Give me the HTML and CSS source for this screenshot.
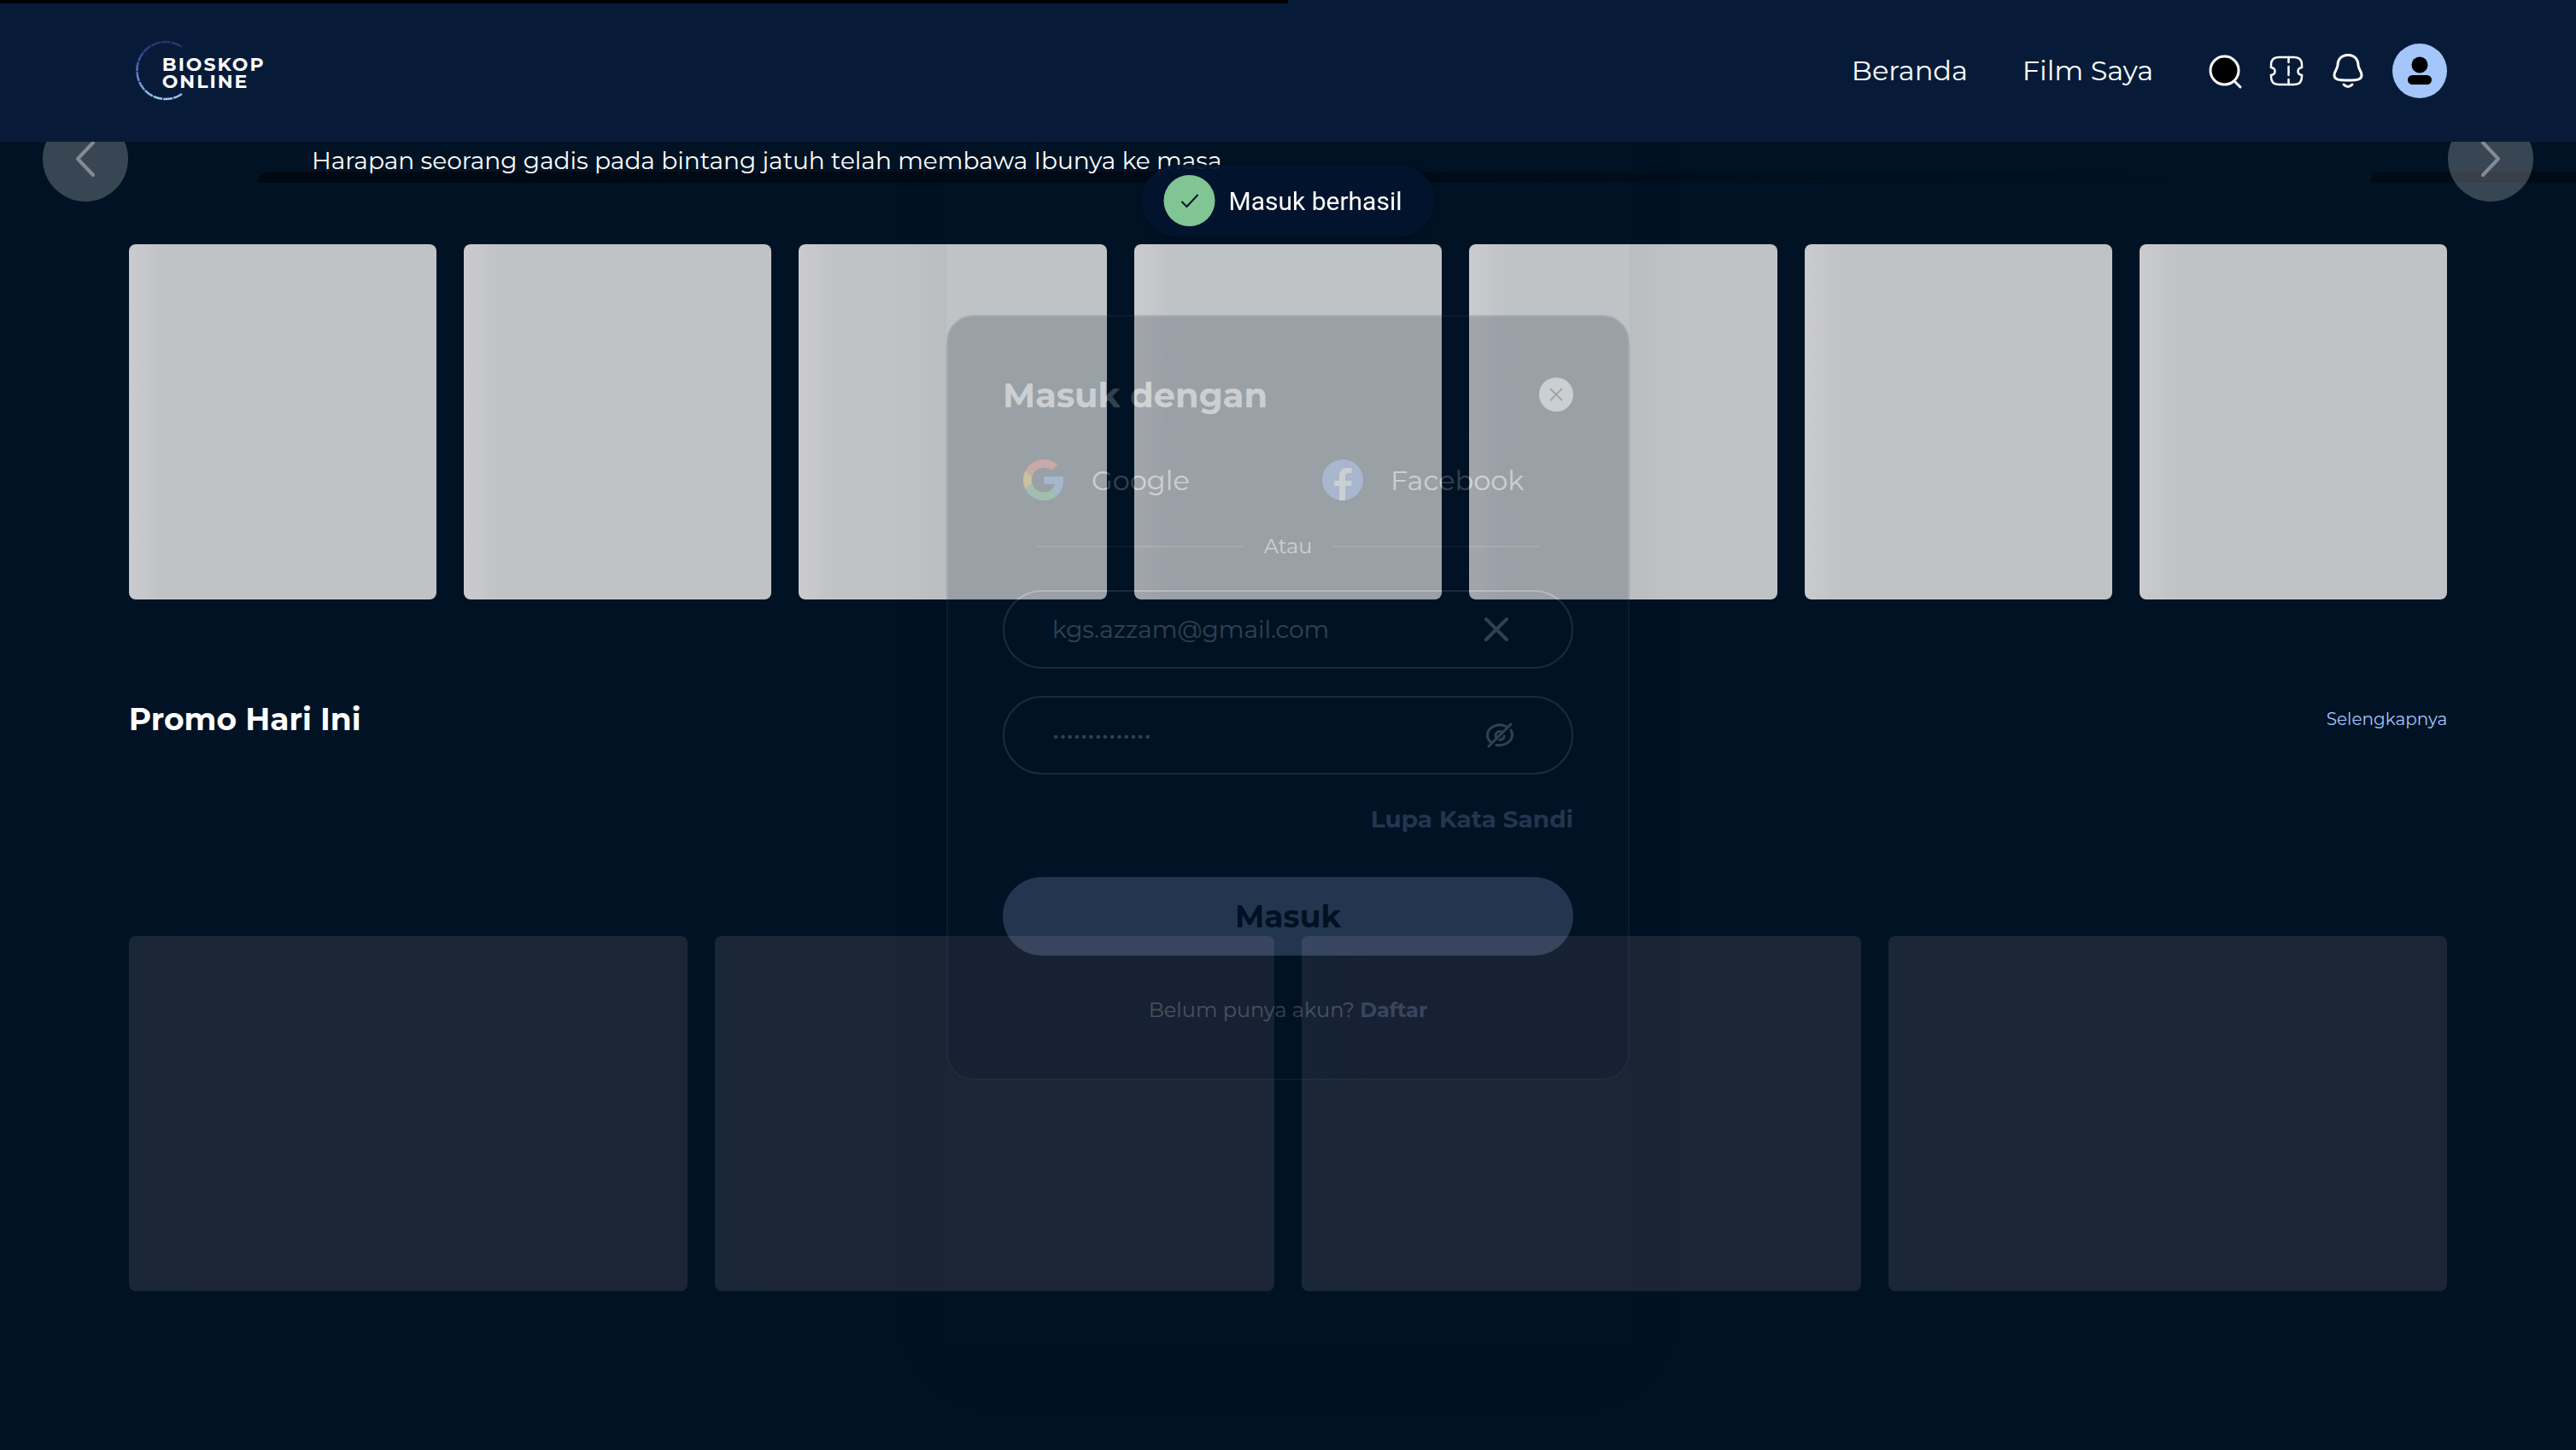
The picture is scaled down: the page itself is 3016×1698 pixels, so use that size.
FILE: index.html
```
<!DOCTYPE html>
<html lang="id">
<head>
<meta charset="utf-8">
<title>Bioskop Online</title>
<link rel="stylesheet" href="styles.css">
</head>
<body>
<div class="progress"></div>
<header class="header">
  <a class="logo" href="#" aria-label="Bioskop Online">
    <svg class="logo-ring" viewBox="0 0 70 70" aria-hidden="true">
      <defs>
        <linearGradient id="ring" x1="0" y1="0" x2="0" y2="1">
          <stop offset="0" stop-color="#2b3168"/>
          <stop offset=".3" stop-color="#3a4fa0"/>
          <stop offset="1" stop-color="#9cc8f0"/>
        </linearGradient>
      </defs>
      <path d="M53 62A33.500 33.500 0 1 1 53 7" fill="none" stroke="url(#ring)" stroke-width="2.500" stroke-dasharray="11 1"/>
    </svg>
    <span class="logo-text">BIOSKOP<br>ONLINE</span>
  </a>
  <nav class="nav">
    <a class="nav-link" href="#">Beranda</a>
    <a class="nav-link" href="#">Film Saya</a>
    <div class="nav-icons">
      <button class="icon-button" type="button" aria-label="Cari">
        <svg viewBox="0 0 40 40"><circle cx="19.500" cy="19.500" r="16.500" fill="#000" stroke="#fff" stroke-width="3"/><path d="M32 33l6 6" stroke="#fff" stroke-width="3" stroke-linecap="round"/></svg>
      </button>
      <button class="icon-button" type="button" aria-label="Tiket">
        <svg viewBox="0 0 40 40" fill="none" stroke="#fff" stroke-width="2.500" stroke-linecap="round"><path d="M2 16V13Q2 4 11 4H29Q38 4 38 13V16C32 17 32 24 38 25V27Q38 36 29 36H11Q2 36 2 27V25C8 24 8 17 2 16Z"/><path d="M22.500 4V10M22.500 15V25M22.500 30V36"/></svg>
      </button>
      <button class="icon-button" type="button" aria-label="Notifikasi">
        <svg viewBox="0 0 40 40" fill="none" stroke="#fff" stroke-width="3" stroke-linecap="round"><path d="M20 1.500C12 1.500 8 7 8 13C8 18 4 20 4 25C4 30 8 31 20 31C32 31 36 30 36 25C36 20 32 18 32 13C32 7 28 1.500 20 1.500Z"/><path d="M15 36Q20 41 25 36"/></svg>
      </button>
      <button class="avatar" type="button" aria-label="Profil">
        <svg viewBox="0 0 64 64"><circle cx="32" cy="25" r="9.500"/><rect x="18" y="37" width="28" height="11" rx="5.500"/></svg>
      </button>
    </div>
  </nav>
</header>

<main>
  <section class="hero">
    <div class="slide slide-current"></div>
    <div class="slide slide-next"></div>
    <p class="hero-text">Harapan seorang gadis pada bintang jatuh telah membawa Ibunya ke masa</p>
    <button class="arrow arrow-prev" type="button" aria-label="Sebelumnya"><svg viewBox="0 0 100 100"><path d="M59 31L41 50L59 69"/></svg></button>
    <button class="arrow arrow-next" type="button" aria-label="Berikutnya"><svg viewBox="0 0 100 100"><path d="M41 31L59 50L41 69"/></svg></button>
  </section>
  <section class="row movies">
    <div class="poster"></div><div class="poster"></div><div class="poster"></div><div class="poster"></div><div class="poster"></div><div class="poster"></div><div class="poster"></div>
  </section>
  <section class="promo">
    <div class="promo-head">
      <h2>Promo Hari Ini</h2>
      <a href="#">Selengkapnya</a>
    </div>
    <div class="row promos">
      <div class="banner"></div><div class="banner"></div><div class="banner"></div><div class="banner"></div>
    </div>
  </section>
</main>

<div class="toast" role="status">
  <span class="toast-icon"><svg viewBox="0 0 60 60"><path d="M21 31L27 37L40 23"/></svg></span>
  <span>Masuk berhasil</span>
</div>

<div class="overlay">
  <form class="modal">
    <div class="modal-head">
      <h1>Masuk dengan</h1>
      <button class="close" type="button" aria-label="Tutup"><svg viewBox="0 0 40 40"><path d="M13 13L27 27M27 13L13 27"/></svg></button>
    </div>
    <div class="socials">
      <button class="social" type="button">
        <svg viewBox="0 0 48 48"><path fill="#ea4335" d="M24 9.500c3.540 0 6.710 1.220 9.210 3.600l6.850-6.850C35.900 2.380 30.470 0 24 0 14.620 0 6.510 5.380 2.560 13.220l7.980 6.190C12.430 13.720 17.740 9.500 24 9.500z"/><path fill="#4285f4" d="M46.980 24.550c0-1.570-.15-3.090-.38-4.550H24v9.020h12.940c-.58 2.960-2.260 5.480-4.780 7.180l7.730 6c4.510-4.180 7.090-10.360 7.090-17.650z"/><path fill="#fbbc05" d="M10.530 28.590c-.48-1.450-.76-2.990-.76-4.590s.27-3.140.76-4.590l-7.980-6.190C.92 16.460 0 20.120 0 24c0 3.880.92 7.540 2.560 10.780l7.970-6.190z"/><path fill="#34a853" d="M24 48c6.480 0 11.930-2.130 15.890-5.810l-7.730-6c-2.150 1.450-4.920 2.300-8.160 2.300-6.260 0-11.570-4.220-13.470-9.910l-7.980 6.190C6.510 42.620 14.620 48 24 48z"/></svg>
        Google
      </button>
      <button class="social" type="button">
        <svg viewBox="0 0 48 48"><circle cx="24" cy="24" r="24" fill="#4f88f0"/><path fill="#fff" d="M20 48V31h-6v-6h6v-5c0-7 4-10 10-10h4.500v6H31c-3 0-4 1.500-4 4v5h8l-1 6h-7v17z"/></svg>
        Facebook
      </button>
    </div>
    <div class="divider">Atau</div>
    <div class="field">
      <input type="text" aria-label="Email" value="kgs.azzam@gmail.com">
      <button class="clear" type="button" aria-label="Hapus"><svg viewBox="0 0 48 48"><path d="M12 12L36 36M36 12L12 36"/></svg></button>
    </div>
    <div class="field">
      <input type="password" aria-label="Kata sandi" value="12345678901234">
      <button class="eye" type="button" aria-label="Tampilkan kata sandi"><svg viewBox="0 0 40 40"><path d="M27 9.500C17 5 5.500 11 5.500 20Q5.500 25 10 28.500M33 14C38 24 29 33 16 31.500"/><path d="M16.500 23.500C13 19 17 14 22.500 16M20 25.500Q24.500 25 25 21"/><path d="M7 33L33 7"/></svg></button>
    </div>
    <a class="forgot" href="#">Lupa Kata Sandi</a>
    <button class="submit" type="submit">Masuk</button>
    <p class="signup">Belum punya akun? <a href="#">Daftar</a></p>
  </form>
</div>
</body>
</html>
```
FILE: styles.css
```
* { box-sizing: border-box; }
html { background: #011224; }
body {
  margin: 0;
  overflow: hidden;
  color: #fff;
  font-family: Montserrat, Inter, sans-serif;
  font-size: 32px;
}
button { padding: 0; border: 0; background: none; color: inherit; font: inherit; }
a { color: inherit; text-decoration: none; }
h1, h2, p { margin: 0; }
svg { display: block; overflow: visible; }

.progress { position: fixed; z-index: 6; top: 0; left: 0; width: 50%; height: 4px; background: #000; }
.header {
  position: relative;
  z-index: 5;
  display: flex;
  align-items: center;
  justify-content: space-between;
  height: 166px;
  padding: 0 5%;
  background: #071b39;
}
.logo { display: flex; align-items: center; padding-left: 9px; }
.logo-ring { width: 70px; height: 70px; }
.logo-text { margin-left: -40px; padding-top: 5px; font-size: 22px; font-weight: 700; line-height: 20px; letter-spacing: 2px; }
.nav { display: flex; align-items: center; gap: 64px; }
.nav-link { line-height: 40px; }
.nav-icons { display: flex; align-items: center; gap: 32px; }
.icon-button, .icon-button svg { width: 40px; height: 40px; }
.avatar, .avatar svg { width: 64px; height: 64px; }
.avatar { border-radius: 50%; background: #a4c6fa; }

.hero { position: relative; height: 120px; }
.slide { position: absolute; top: 35px; height: 13px; border-radius: 16px 0 0; }
.slide-current { left: 10%; right: 14%; background: linear-gradient(90deg, #000812, #000a16 50%, #011224); }
.slide-next { left: 92%; right: 0; background: #000b17; }
.hero-text { position: absolute; top: 2px; left: 365px; font-size: 28px; line-height: 40px; }
.arrow { position: absolute; top: -30px; width: 100px; height: 100px; border-radius: 50%; background: rgba(255, 255, 255, .22); }
.arrow svg { fill: none; stroke: #858b93; stroke-width: 4; stroke-linecap: round; stroke-linejoin: round; }
.arrow-prev { left: 50px; }
.arrow-next { right: 50px; }

.row { display: grid; gap: 32px; }
.movies { grid-template-columns: repeat(7, 1fr); padding: 0 5%; }
.poster { height: 416px; border-radius: 8px; background: linear-gradient(90deg, #cbcbce, #bfc3c6 12%); }
.promo { padding: 112px 5% 0; }
.promo-head { display: flex; align-items: center; justify-content: space-between; margin-bottom: 226px; line-height: 56px; }
.promo-head h2 { font-size: 36px; font-weight: 700; }
.promo-head a { color: #a4c6fa; font-size: 20px; }
.promos { grid-template-columns: repeat(4, 1fr); }
.banner { height: 416px; border-radius: 8px; background: linear-gradient(90deg, #1a2737, #1b2536 12%); }

.toast {
  position: fixed;
  z-index: 4;
  top: 193px;
  left: 50%;
  display: flex;
  align-items: center;
  gap: 16px;
  height: 84px;
  padding: 0 38px 0 26px;
  border-radius: 42px;
  background: rgba(2, 20, 46, .95);
  box-shadow: 0 2px 8px rgba(0, 0, 0, .3);
  font-family: Roboto, sans-serif;
  font-size: 30px;
  white-space: nowrap;
  transform: translateX(-50%);
}
.toast-icon { width: 60px; height: 60px; border-radius: 50%; background: #82c594; }
.toast-icon path { fill: none; stroke: #00122d; stroke-width: 2; }

.overlay {
  position: fixed;
  z-index: 3;
  top: 119px;
  bottom: 118px;
  left: 50%;
  width: 800px;
  padding-top: 250px;
  opacity: .2;
  box-shadow: 0 16px 80px rgba(0, 0, 0, .25);
  transform: translateX(-50%);
}
.modal { height: 896px; padding: 62px 64px; border: 2px solid #3a4858; border-radius: 32px; background: #081528; }
.modal-head { display: flex; align-items: center; justify-content: space-between; height: 58px; }
.modal-head h1 { font-size: 40px; font-weight: 700; }
.close { width: 40px; height: 40px; border-radius: 50%; background: #fff; }
.close path { stroke: #26364a; stroke-width: 2; }
.socials { display: grid; grid-template-columns: 1fr 1fr; gap: 32px; margin-top: 47px; }
.social { display: flex; align-items: center; gap: 32px; height: 48px; padding-left: 24px; }
.social svg { width: 48px; height: 48px; }
.divider { display: flex; align-items: center; gap: 24px; margin: 36px 40px 33px; font-size: 24px; line-height: 36px; }
.divider::before, .divider::after { content: ""; flex: 1; height: 2px; background: #445; }
.field { display: flex; align-items: center; justify-content: space-between; height: 92px; margin-bottom: 32px; padding: 0 64px 0 56px; border: 2px solid #8891a0; border-radius: 46px; }
.field input { flex: 1; min-width: 0; padding: 0; border: 0; outline: 0; background: none; color: #fff; font: inherit; font-size: 28px; }
.field svg { fill: none; stroke: #fff; stroke-linecap: round; }
.clear svg { width: 48px; height: 48px; stroke-width: 4; }
.eye svg { width: 40px; height: 40px; stroke-width: 3; }
.forgot { display: block; color: #a9c6fa; font-size: 28px; font-weight: 700; line-height: 40px; text-align: right; }
.submit { display: block; width: 100%; height: 92px; margin: 48px 0 44px; border-radius: 46px; background: #b0c8fc; color: #001123; font-size: 36px; font-weight: 700; }
.signup { font-size: 24px; line-height: 40px; text-align: center; }
.signup a { color: #b0c8fc; font-weight: 700; }
```
